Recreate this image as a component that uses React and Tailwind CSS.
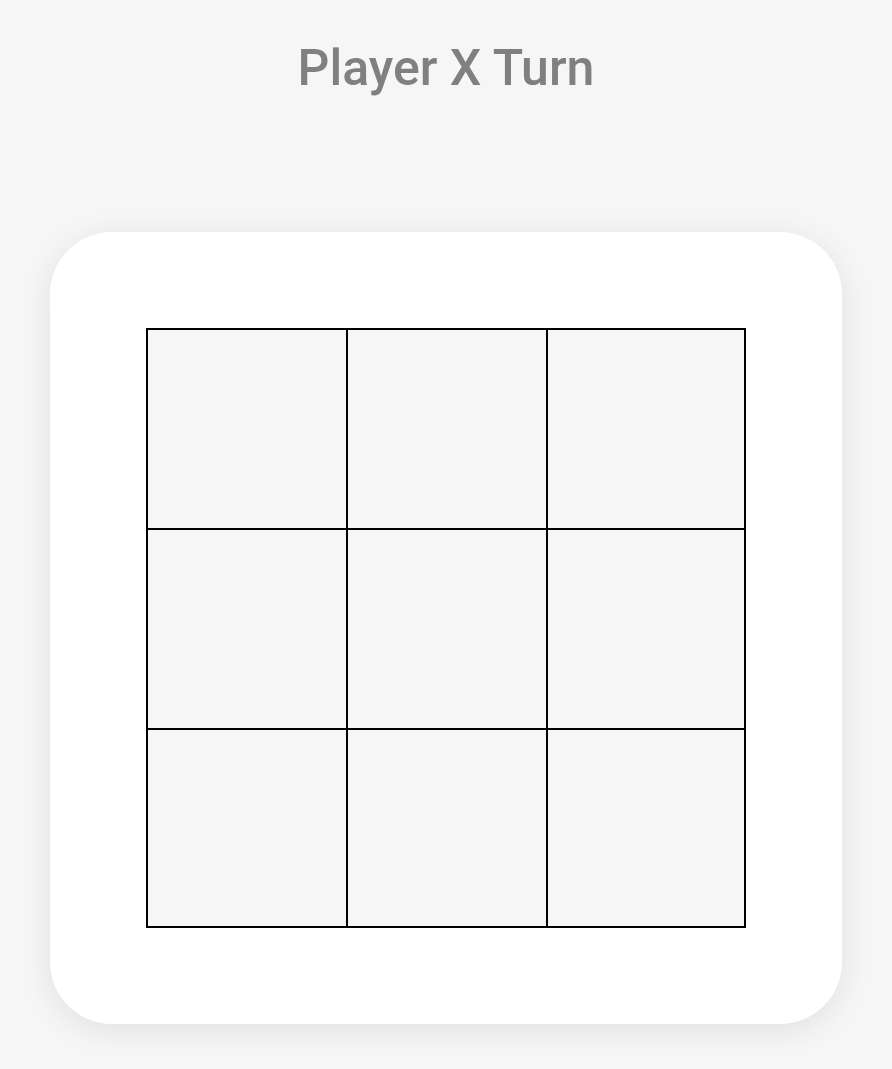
import React, { useState } from 'react';

const App = () => {
  const [board, setBoard] = useState(Array(9).fill(null));
  const [player, setPlayer] = useState('X');

  const handleClick = (i) => {
    if (board[i]) return;
    const next = [...board];
    next[i] = player;
    setBoard(next);
    setPlayer(player === 'X' ? 'O' : 'X');
  };

  return (
    <div className="min-h-[1069px] bg-[#f6f6f6] flex flex-col items-center font-['Roboto',sans-serif]">
      <h1 className="mt-[43px] text-[50px] leading-[50px] font-medium text-[#808080]">
        Player {player} Turn
      </h1>

      <div className="mt-[139px] w-[792px] h-[792px] bg-white rounded-[62px] shadow-[0_6px_32px_rgba(0,0,0,0.09)] p-[96px]">
        <div className="grid grid-cols-[200px_200px_198px] grid-rows-[200px_200px_198px] border-r-2 border-b-2 border-black w-[600px] h-[600px]">
          {board.map((cell, i) => (
            <button
              key={i}
              onClick={() => handleClick(i)}
              className="border-l-2 border-t-2 border-black bg-[#f6f6f6] text-[96px] font-medium text-[#808080] flex items-center justify-center"
            >
              {cell}
            </button>
          ))}
        </div>
      </div>
    </div>
  );
};

export default App;
